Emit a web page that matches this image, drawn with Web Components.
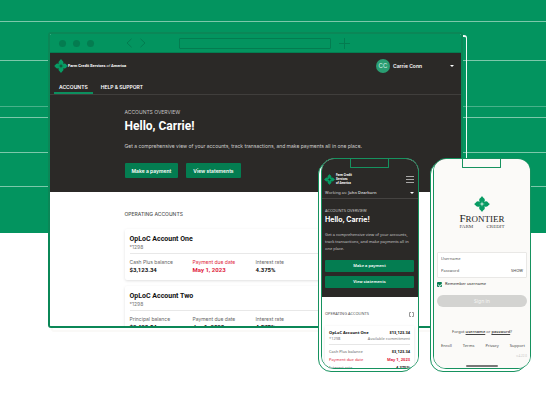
<!DOCTYPE html>
<html lang="en">
<head>
<meta charset="utf-8">
<meta name="viewport" content="width=device-width, initial-scale=1">
<title>Farm Credit Services of America</title>
<style>
  html, body { height: 100%; }
  body {
    margin: 0;
    background: #fff;
    color: #222;
    font-family: Inter, Roboto, "Liberation Sans", sans-serif;
    --green: #03945f;
    --green-dark: #047d51;
    --outline: #16925f;
    --dark: #2b2927;
    --heading: Roboto, "Liberation Sans", sans-serif;
    --small: "Noto Sans", "Open Sans", sans-serif;
  }
</style>
</head>
<body>
<showcase-stage>
  <browser-window>
    <site-header></site-header>
    <hero-banner></hero-banner>
    <account-list>
      <account-card name="OpLoC Account One" number="*1298" label="Cash Plus balance" balance="$3,123.34" due="May 1, 2023" rate="4.375%" alert></account-card>
      <account-card name="OpLoC Account Two" number="*1298" label="Principal balance" balance="$2,423.54" due="Jun 1, 2023" rate="4.875%"></account-card>
    </account-list>
  </browser-window>
  <phone-frame slot="first"><mobile-overview></mobile-overview></phone-frame>
  <phone-frame slot="second"><sign-in-screen></sign-in-screen></phone-frame>
</showcase-stage>

<script>
const RESET = `
  :host, * { box-sizing: border-box; }
  button, input { font: inherit; color: inherit; margin: 0; padding: 0; border: 0; background: none; border-radius: 0; outline: 0; }
  button { cursor: pointer; }
  a { color: inherit; text-decoration: none; }
  h1, h2, h3, p, dl, dd, dt { margin: 0; font-weight: inherit; font-size: inherit; }
`;
function define(name, html, setup) {
  const template = document.createElement('template');
  customElements.define(name, class extends HTMLElement {
    constructor() {
      super();
      template.innerHTML ||= `<style>${RESET}</style>${html}`;
      this.attachShadow({ mode: 'open' }).append(template.content.cloneNode(true));
    }
    connectedCallback() { if (setup) setup(this, this.shadowRoot); }
  });
}

define('brand-mark', `
  <style>
    :host { display: block; flex: none; width: 14px; height: 14px; }
    svg { display: block; width: 100%; height: 100%; }
  </style>
  <svg viewBox="0 0 28 28" aria-hidden="true">
    <g fill="#079b63">
      <path id="petal" d="M14 0C15 2.500 19 4 19 7C19 9 17.500 10 17.500 14H10.500C10.500 10 9 9 9 7C9 4 13 2.500 14 0Z"/>
      <use href="#petal" transform="rotate(90 14 14)"/>
      <use href="#petal" transform="rotate(180 14 14)"/>
      <use href="#petal" transform="rotate(270 14 14)"/>
    </g>
    <path fill="var(--mark-vein, #1c3a2e)" d="M14 9L15 13L19 14L15 15L14 19L13 15L9 14L13 13Z"/>
  </svg>`);

define('showcase-stage', `
  <style>
    :host { display: flex; position: relative; height: 100vh; padding: 32px 83px 85px 48px; }
    .field { position: absolute; inset: 0 0 auto 0; height: 233px; background: var(--green); overflow: hidden; }
    .field i { display: block; height: 1px; background: #7cc8aa; }
    .field i:nth-child(1) { margin-top: 21px; }
    .field i:nth-child(2) { margin-top: 38px; }
    .field i:nth-child(3) { margin-top: 45px; background: #48b18a; }
    .field i:nth-child(4) { margin-top: 10px; }
    .field i:nth-child(5) { margin-top: 34px; }
    .field i:nth-child(6) { margin-top: 33px; }
    .main { position: relative; display: flex; flex: 1; min-width: 0; }
    .phone { position: absolute; display: flex; top: 158px; bottom: 41px; width: 101px; }
    .first { right: 127px; }
    .second { right: 15px; }
  </style>
  <div class="field" aria-hidden="true"><i></i><i></i><i></i><i></i><i></i><i></i></div>
  <div class="main"><slot></slot></div>
  <div class="phone first"><slot name="first"></slot></div>
  <div class="phone second"><slot name="second"></slot></div>`);

define('browser-window', `
  <style>
    :host { display: flex; flex: 1; min-width: 0; position: relative; }
    .echo { position: absolute; inset: 3px -4px -4px 3px; border: 2px solid #faf9f7; border-right: 1px solid #f2faf6; border-top-color: #f2faf6; border-radius: 3px; }
    .frame { position: relative; display: flex; flex-direction: column; flex: 1; min-width: 0; border: 2px solid #0b8757; border-radius: 3px; overflow: hidden; background: #fff; }
    .bar { display: flex; align-items: center; flex: none; height: 19px; background: var(--green); border-bottom: 1px solid var(--green-dark); }
    .dots { display: flex; gap: 7px; margin-left: 9px; }
    .dots i { width: 7px; height: 7px; border-radius: 50%; background: #047c50; }
    .nav { display: flex; gap: 8px; margin-left: 32px; }
    button { display: block; line-height: 0; }
    svg { display: block; fill: none; stroke: #047c50; stroke-width: 1; }
    input { flex: 0 1 37%; min-width: 0; height: 11px; margin: 0 8px 0 33px; border: 1px solid #047c50; border-radius: 1px; }
    .page { flex: 1; min-height: 0; overflow: hidden; }
  </style>
  <div class="echo" aria-hidden="true"></div>
  <div class="frame">
    <div class="bar">
      <div class="dots" aria-hidden="true"><i></i><i></i><i></i></div>
      <div class="nav">
        <button aria-label="Back"><svg width="6" height="10" viewBox="0 0 6 10"><path d="M5.500 .8L1 5L5.500 9.200"/></svg></button>
        <button aria-label="Forward"><svg width="6" height="10" viewBox="0 0 6 10"><path d="M.5 .8L5 5L.5 9.200"/></svg></button>
      </div>
      <input type="text" aria-label="Address">
      <button aria-label="New tab"><svg width="11" height="11" viewBox="0 0 11 11"><path d="M5.500 0V11M0 5.500H11"/></svg></button>
    </div>
    <div class="page"><slot></slot></div>
  </div>`);

define('site-header', `
  <style>
    :host { display: block; background: var(--dark); color: #fff; font-size: 5px; line-height: 8px; font-weight: 700; }
    .top { display: flex; align-items: center; justify-content: space-between; height: 25px; padding: 0 7px 0 4px; }
    .brand { display: flex; align-items: center; font-family: var(--heading); font-size: 4px; }
    .brand em { font-weight: 400; }
    .user { display: flex; align-items: center; font-weight: 600; width: 78px; text-align: left; }
    .avatar { width: 14px; height: 14px; margin-right: 3px; border-radius: 50%; background: #2a9d72; font-size: 6px; line-height: 14px; font-weight: 400; text-align: center; color: #d5efe4; }
    .caret { margin-left: auto; border: 2px solid transparent; border-top-color: #fff; border-bottom: 0; }
    nav { display: flex; align-items: stretch; gap: 3px; height: 17px; padding-left: 4px; border-bottom: 1px solid #403e3c; }
    nav a { padding: 5px 5px 0; font-weight: 600; }
    nav a[aria-current] { border-bottom: 2px solid #0c8f5e; }
  </style>
  <div class="top">
    <a class="brand" href="#"><brand-mark></brand-mark><span>Farm Credit Services <em>of</em> America</span></a>
    <button class="user"><span class="avatar">CC</span><span>Carrie Conn</span><span class="caret"></span></button>
  </div>
  <nav aria-label="Main"><a href="#" aria-current="page">ACCOUNTS</a><a href="#">HELP &amp; SUPPORT</a></nav>`);

define('hero-banner', `
  <style>
    :host { display: block; background: var(--dark); color: #fff; padding: 13px 24px 14px; }
    .inner { max-width: 262px; margin: 0 auto; }
    .over { font-size: 5px; line-height: 8px; color: #c5c4c3; }
    h1 { font-family: var(--heading); font-size: 12px; line-height: 16px; margin: 2px 0 8px; font-weight: 700; }
    .lead { font-size: 5px; line-height: 8px; color: #d0cfce; white-space: nowrap; }
    .actions { display: flex; gap: 8px; margin-top: 13px; }
    .actions button { height: 15px; padding: 0 7px; border-radius: 1px; background: var(--green-dark); font-size: 5px; line-height: 8px; font-weight: 600; }
  </style>
  <div class="inner">
    <p class="over">ACCOUNTS OVERVIEW</p>
    <h1>Hello, Carrie!</h1>
    <p class="lead">Get a comprehensive view of your accounts, track transactions, and make payments all in one place.</p>
    <div class="actions"><button>Make a payment</button><button>View statements</button></div>
  </div>`);

define('account-list', `
  <style>
    :host { display: block; padding: 18px 24px; background: #fff; }
    .inner { max-width: 262px; margin: 0 auto; }
    h2 { font-size: 5px; line-height: 8px; font-weight: 500; color: #555; margin-bottom: 11px; }
    .cards { display: grid; gap: 6px; }
  </style>
  <div class="inner"><h2>OPERATING ACCOUNTS</h2><div class="cards"><slot></slot></div></div>`);

define('account-card', `
  <style>
    :host { display: block; background: #fff; border-radius: 2px; box-shadow: 0 1px 3px rgba(0,0,0,.13); padding: 5px 5px 7px; color: #111; }
    h3 { font-family: var(--heading); font-size: 7px; line-height: 10px; font-weight: 700; }
    .num { font-size: 5px; line-height: 6px; color: #777; padding-bottom: 3px; border-bottom: 1px solid #e8e8e8; }
    dl { display: grid; grid-template-columns: repeat(4, 1fr); margin-top: 4px; font-size: 5px; line-height: 8px; }
    dt { color: #666; }
    dd { font-family: var(--heading); font-size: 6px; line-height: 7px; font-weight: 700; }
    :host([alert]) .due * { color: #e0233c; }
  </style>
  <h3 data-f="name"></h3>
  <p class="num" data-f="number"></p>
  <dl>
    <div><dt data-f="label"></dt><dd data-f="balance"></dd></div>
    <div class="due"><dt>Payment due date</dt><dd data-f="due"></dd></div>
    <div><dt>Interest rate</dt><dd data-f="rate"></dd></div>
  </dl>`, (host, root) => {
    for (const el of root.querySelectorAll('[data-f]')) el.textContent = host.getAttribute(el.dataset.f);
  });

define('phone-frame', `
  <style>
    :host { display: grid; grid-template: minmax(0, 1fr) / minmax(0, 1fr); flex: 1; min-width: 0; }
    .back, .front { grid-area: 1 / 1; border: 1px solid var(--outline); border-radius: 13px; background: #fff; min-width: 0; min-height: 0; }
    .back { margin: 3px 4px 0 0; }
    .front { display: flex; margin: 0 0 3px 3px; overflow: hidden; position: relative; }
    .notch { position: absolute; top: 0; left: 28px; right: 29px; height: 9px; border: 1px solid var(--outline); border-top: 0; border-radius: 0 0 1px 1px; }
  </style>
  <div class="back" aria-hidden="true"></div>
  <div class="front"><slot></slot><div class="notch" aria-hidden="true"></div></div>`);

define('mobile-overview', `
  <style>
    :host { display: block; flex: 1; min-width: 0; color: #fff; font-family: var(--small); font-size: 4px; line-height: 6px; }
    .dark { background: var(--dark); padding-bottom: 9px; }
    .top { display: flex; align-items: center; justify-content: space-between; padding: 14px 4px 0 2px; }
    .brand { display: flex; align-items: center; gap: 1px; font-family: var(--heading); font-size: 3px; font-weight: 700; line-height: 4px; }
    brand-mark { width: 11px; height: 11px; }
    .menu { display: grid; gap: 2px; width: 8px; }
    .menu i { height: 1px; background: #a9a8a7; }
    .as { display: flex; align-items: center; justify-content: space-between; width: 100%; height: 14px; padding: 3px 4px 0 3px; border-bottom: 1px solid #454341; color: #cfcecd; }
    .as b { font-weight: 600; }
    .caret { border: 2px solid transparent; border-top: 2px solid #fff; border-bottom: 0; }
    .body { padding: 9px 4px 0 3px; }
    .over { color: #c5c4c3; }
    h2 { font-family: Inter, Roboto, sans-serif; font-size: 7px; line-height: 10px; margin: 1px 0 6px; font-weight: 700; }
    .body p:not(.over) { color: #c9c8c7; line-height: 7px; }
    .actions { display: grid; gap: 4px; margin-top: 8px; }
    .actions button { height: 12px; background: var(--green-dark); font-weight: 600; border-radius: 1px; }
    .light { padding: 14px 4px 0 3px; color: #111; background: #fff; }
    .head { display: flex; justify-content: space-between; align-items: center; color: #555; margin-bottom: 9px; }
    .head svg { display: block; fill: none; stroke: #999; }
    .card { box-shadow: 0 1px 3px rgba(0,0,0,.13); padding: 4px; }
    .row { display: flex; justify-content: space-between; }
    .row b { font-weight: 700; }
    .sub { color: #777; padding-bottom: 2px; margin-bottom: 3px; border-bottom: 1px solid #e6e6e6; }
    dl .row { color: #666; line-height: 8px; }
    dl dd { font-weight: 700; color: #111; }
    dl .due, dl .due dd { color: #e0233c; }
  </style>
  <div class="dark">
    <div class="top">
      <a class="brand" href="#"><brand-mark></brand-mark><span>Farm Credit<br>Services<br>of America</span></a>
      <button class="menu" aria-label="Menu"><i></i><i></i><i></i></button>
    </div>
    <button class="as"><span>Working as: <b>John Dearborn</b></span><span class="caret"></span></button>
    <div class="body">
      <p class="over">ACCOUNTS OVERVIEW</p>
      <h2>Hello, Carrie!</h2>
      <p>Get a comprehensive view of your accounts, track transactions, and make payments all in one place.</p>
      <div class="actions"><button>Make a payment</button><button>View statements</button></div>
    </div>
  </div>
  <div class="light">
    <div class="head"><span>OPERATING ACCOUNTS</span><button aria-label="Change view"><svg width="5" height="5" viewBox="0 0 5 5"><path d="M2 .5H.5V4.500H2M3 .5H4.500V4.500H3"/></svg></button></div>
    <div class="card">
      <div class="row"><b>OpLoC Account One</b><b>$13,123.34</b></div>
      <div class="row sub"><span>*1298</span><span>Available commitment</span></div>
      <dl>
        <div class="row"><dt>Cash Plus balance</dt><dd>$3,123.34</dd></div>
        <div class="row due"><dt>Payment due date</dt><dd>May 1, 2023</dd></div>
        <div class="row"><dt>Interest rate</dt><dd>4.375%</dd></div>
      </dl>
    </div>
  </div>`);

define('sign-in-screen', `
  <style>
    :host { display: flex; flex-direction: column; flex: 1; min-width: 0; padding: 37px 3px 1px; background: #fbfaf8; color: #444; font-family: var(--small); font-size: 4px; line-height: 6px; --mark-vein: #d9efe5; }
    .logo { align-self: center; display: flex; flex-direction: column; align-items: center; font-family: "Liberation Serif", serif; color: #222; }
    brand-mark { width: 16px; height: 16px; }
    .name { font-size: 9px; line-height: 9px; margin-top: 2px; }
    .name span { font-size: 11px; }
    .sub { display: flex; justify-content: space-between; align-self: stretch; font-size: 5px; line-height: 5px; color: #444; }
    .fields { margin-top: 23px; border: 1px solid #e9e8e6; border-radius: 1px; background: #fff; }
    .field { display: flex; align-items: center; height: 12px; padding: 0 3px; }
    .field input { flex: 1; min-width: 0; }
    input::placeholder { color: #555; opacity: 1; }
    .check { display: flex; align-items: center; gap: 3px; margin-top: 3px; color: #222; }
    .check input { appearance: none; display: grid; place-items: center; width: 5px; height: 5px; border-radius: 1px; background: var(--green-dark); }
    .check input::after { content: ""; width: 3px; height: 2px; border: solid #cfe9dd; border-width: 0 0 1px 1px; transform: rotate(-45deg); }
    .submit { display: block; width: 100%; height: 12px; margin-top: 8px; border-radius: 6px; background: #d3d3d1; color: #f6f6f4; font-size: 5px; }
    .forgot { text-align: center; margin-top: 22px; }
    .forgot a { text-decoration: underline; font-weight: 600; }
    nav { display: flex; justify-content: space-between; padding: 0 2px 0 4px; margin-top: 8px; }
    .ver { font-size: 3px; text-align: right; color: #c5c5c3; margin-top: 4px; }
    .home { width: 32px; height: 2px; margin: auto auto 0; border-radius: 1px; background: #777; }
  </style>
  <div class="logo"><brand-mark></brand-mark><div class="name"><span>F</span>RONTIER</div><div class="sub"><span>FARM</span><span>CREDIT</span></div></div>
  <form>
    <div class="fields">
      <div class="field"><input type="text" placeholder="Username" aria-label="Username"></div>
      <div class="field"><input type="password" placeholder="Password" aria-label="Password"><button type="button">SHOW</button></div>
    </div>
    <label class="check"><input type="checkbox" checked>Remember username</label>
    <button type="button" class="submit">Sign in</button>
  </form>
  <p class="forgot">Forgot <a href="#">username</a> or <a href="#">password</a>?</p>
  <nav aria-label="Footer"><a href="#">Enroll</a><a href="#">Terms</a><a href="#">Privacy</a><a href="#">Support</a></nav>
  <p class="ver">v.4.22.0</p>
  <div class="home" aria-hidden="true"></div>`);
</script>
</body>
</html>
